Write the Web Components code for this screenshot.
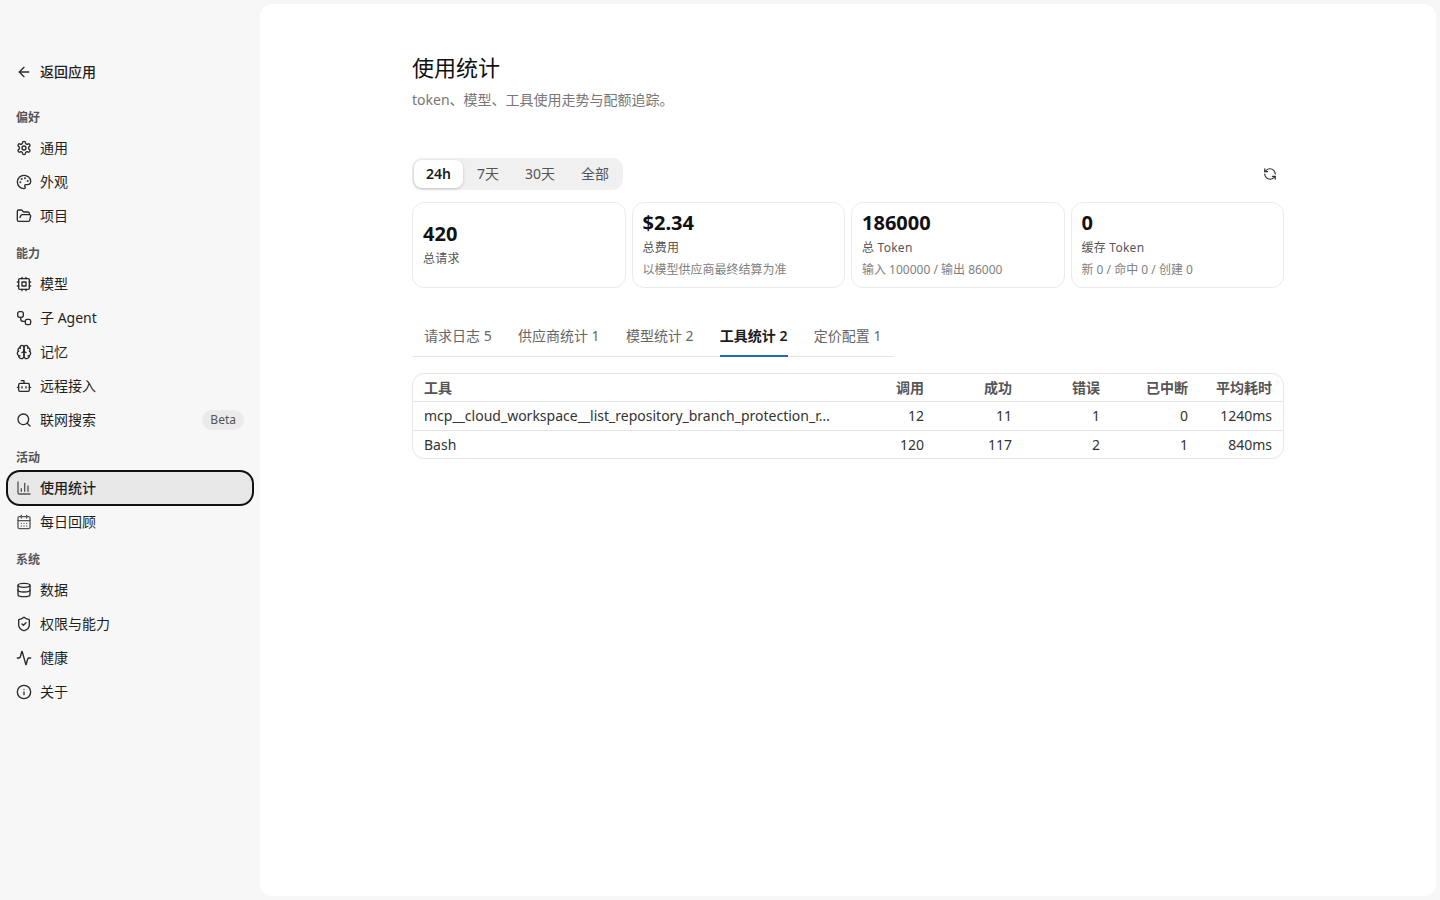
<!DOCTYPE html>
<html lang="zh-CN">
<head>
<meta charset="utf-8">
<title>使用统计</title>
<style>
    html, body { margin: 0; height: 100%; }
    body {
        background: #f7f7f7;
        color: #1a1a1a;
        font-family: "Noto Sans", "Noto Sans CJK SC", sans-serif;
        font-size: 14px;
    }
</style>
</head>
<body>
<app-shell>
    <settings-nav slot="nav"></settings-nav>
    <usage-page></usage-page>
</app-shell>

<script>
const ICONS = {
    back: '<path d="m12 19-7-7 7-7"/><path d="M19 12H5"/>',
    settings: '<path d="M12.22 2h-.44a2 2 0 0 0-2 2v.18a2 2 0 0 1-1 1.73l-.43.25a2 2 0 0 1-2 0l-.15-.08a2 2 0 0 0-2.73.73l-.22.38a2 2 0 0 0 .73 2.73l.15.1a2 2 0 0 1 1 1.72v.51a2 2 0 0 1-1 1.74l-.15.09a2 2 0 0 0-.73 2.73l.22.38a2 2 0 0 0 2.73.73l.15-.08a2 2 0 0 1 2 0l.43.25a2 2 0 0 1 1 1.73V20a2 2 0 0 0 2 2h.44a2 2 0 0 0 2-2v-.18a2 2 0 0 1 1-1.73l.43-.25a2 2 0 0 1 2 0l.15.08a2 2 0 0 0 2.73-.73l.22-.39a2 2 0 0 0-.73-2.73l-.15-.08a2 2 0 0 1-1-1.74v-.5a2 2 0 0 1 1-1.74l.15-.09a2 2 0 0 0 .73-2.73l-.22-.38a2 2 0 0 0-2.73-.73l-.15.08a2 2 0 0 1-2 0l-.43-.25a2 2 0 0 1-1-1.73V4a2 2 0 0 0-2-2z"/><circle cx="12" cy="12" r="3"/>',
    palette: '<path d="M12 22a1 1 0 0 1 0-20 10 9 0 0 1 10 9 5 5 0 0 1-5 5h-2.25a1.75 1.75 0 0 0-1.4 2.8l.3.4a1.75 1.75 0 0 1-1.4 2.8z"/><circle cx="13.5" cy="6.5" r=".5" fill="currentColor"/><circle cx="17.5" cy="10.5" r=".5" fill="currentColor"/><circle cx="6.5" cy="12.5" r=".5" fill="currentColor"/><circle cx="8.5" cy="7.5" r=".5" fill="currentColor"/>',
    folder: '<path d="m6 14 1.5-2.9A2 2 0 0 1 9.24 10H20a2 2 0 0 1 1.94 2.5l-1.54 6a2 2 0 0 1-1.95 1.5H4a2 2 0 0 1-2-2V5a2 2 0 0 1 2-2h3.9a2 2 0 0 1 1.69.9l.81 1.2a2 2 0 0 0 1.67.9H18a2 2 0 0 1 2 2v2"/>',
    cpu: '<rect x="4" y="4" width="16" height="16" rx="2"/><rect x="9" y="9" width="6" height="6"/><path d="M15 2v2M15 20v2M2 15h2M2 9h2M20 15h2M20 9h2M9 2v2M9 20v2"/>',
    agent: '<rect x="2.5" y="2.5" width="8.5" height="8.5" rx="3"/><rect x="14" y="14" width="8" height="8" rx="2.5"/><path d="M7 11v2a4 4 0 0 0 4 4h3"/>',
    brain: '<path d="M12 5a3 3 0 1 0-5.997.125 4 4 0 0 0-2.526 5.77 4 4 0 0 0 .556 6.588A4 4 0 1 0 12 18Z"/><path d="M12 5a3 3 0 1 1 5.997.125 4 4 0 0 1 2.526 5.77 4 4 0 0 1-.556 6.588A4 4 0 1 1 12 18Z"/><path d="M15 13a4.5 4.5 0 0 1-3-4 4.5 4.5 0 0 1-3 4"/><path d="M17.599 6.5a3 3 0 0 0 .399-1.375"/><path d="M6.003 5.125A3 3 0 0 0 6.401 6.5"/><path d="M3.477 10.896a4 4 0 0 1 .585-.396"/><path d="M19.938 10.5a4 4 0 0 1 .585.396"/><path d="M6 18a4 4 0 0 1-1.967-.516"/><path d="M19.967 17.484A4 4 0 0 1 18 18"/>',
    bot: '<path d="M12 8V4H8"/><rect x="4" y="8" width="16" height="12" rx="2"/><path d="M2 14h2M20 14h2M15 13v2M9 13v2"/>',
    search: '<path d="m21 21-4.34-4.34"/><circle cx="11" cy="11" r="8"/>',
    chart: '<path d="M3 3v16a2 2 0 0 0 2 2h16"/><path d="M8 17v-4"/><path d="M13 17V5"/><path d="M18 17V9"/>',
    calendar: '<path d="M8 2v4M16 2v4"/><rect x="3" y="4" width="18" height="18" rx="2"/><path d="M3 10h18M8 14h.01M12 14h.01M16 14h.01M8 18h.01M12 18h.01M16 18h.01"/>',
    database: '<ellipse cx="12" cy="5" rx="9" ry="3"/><path d="M3 5v14a9 3 0 0 0 18 0V5"/><path d="M3 12a9 3 0 0 0 18 0"/>',
    shield: '<path d="M20 13c0 5-3.5 7.5-7.66 8.95a1 1 0 0 1-.67-.01C7.5 20.5 4 18 4 13V6a1 1 0 0 1 1-1c2 0 4.5-1.2 6.24-2.72a1.17 1.17 0 0 1 1.52 0C14.51 3.81 17 5 19 5a1 1 0 0 1 1 1z"/><path d="m9 12 2 2 4-4"/>',
    activity: '<path d="M22 12h-2.48a2 2 0 0 0-1.93 1.46l-2.35 8.36a.25.25 0 0 1-.48 0L9.24 2.18a.25.25 0 0 0-.48 0l-2.35 8.36A2 2 0 0 1 4.49 12H2"/>',
    info: '<circle cx="12" cy="12" r="10"/><path d="M12 16v-4M12 8h.01"/>',
    refresh: '<path d="M21 12a9 9 0 0 0-9-9 9.75 9.75 0 0 0-6.74 2.74L3 8"/><path d="M3 3v5h5"/><path d="M3 12a9 9 0 0 0 9 9 9.75 9.75 0 0 0 6.74-2.74L21 16"/><path d="M16 16h5v5"/>'
};

class UiIcon extends HTMLElement {
    connectedCallback() {
        const size = this.getAttribute('size') || 16;
        this.attachShadow({ mode: 'open' }).innerHTML = `
            <style>
                :host { display: inline-flex; flex: none; }
                svg { display: block; }
            </style>
            <svg width="${size}" height="${size}" viewBox="0 0 24 24" fill="none" stroke="currentColor"
                stroke-width="2" stroke-linecap="round" stroke-linejoin="round">${ICONS[this.getAttribute('name')] || ''}</svg>
        `;
    }
}
customElements.define('ui-icon', UiIcon);

class AppShell extends HTMLElement {
    constructor() {
        super();
        this.attachShadow({ mode: 'open' }).innerHTML = `
            <style>
                :host { display: flex; height: 900px; overflow: hidden; }
                .nav { width: 260px; flex: none; }
                .panel {
                    flex: 1;
                    margin: 4px 4px 4px 0;
                    background: #fff;
                    border-radius: 12px;
                    overflow: hidden;
                }
            </style>
            <div class="nav"><slot name="nav"></slot></div>
            <div class="panel"><slot></slot></div>
        `;
    }
}
customElements.define('app-shell', AppShell);

class NavItem extends HTMLElement {
    constructor() {
        super();
        this.attachShadow({ mode: 'open' }).innerHTML = `
            <style>
                :host { display: block; }
                .row {
                    height: 32px;
                    display: flex;
                    align-items: center;
                    gap: 8px;
                    padding: 0 8px;
                    border-radius: 12px;
                    font-size: 14px;
                    line-height: 20px;
                    color: #1f1f1f;
                }
                ui-icon { color: #2a2a2a; }
                .label { flex: 1; }
                :host([active]) .row {
                    background: #e7e7e7;
                    box-shadow: 0 0 0 2px #111;
                }
                :host([active]) ui-icon { color: #555; }
                :host([active]) .label { font-weight: 500; }
                :host([muted]) ui-icon { color: #555; }
                .badge {
                    font-size: 12px;
                    line-height: 20px;
                    padding: 0 8px;
                    border-radius: 10px;
                    background: #ebebeb;
                    color: #555;
                }
            </style>
            <div class="row">
                <ui-icon name="${this.getAttribute('icon')}"></ui-icon>
                <span class="label"><slot></slot></span>
                ${this.hasAttribute('badge') ? `<span class="badge">${this.getAttribute('badge')}</span>` : ''}
            </div>
        `;
    }
}
customElements.define('nav-item', NavItem);

class NavGroup extends HTMLElement {
    constructor() {
        super();
        this.attachShadow({ mode: 'open' }).innerHTML = `
            <style>
                :host { display: flex; flex-direction: column; gap: 2px; margin-top: 12px; }
                .title {
                    height: 20px;
                    margin-bottom: 2px;
                    padding: 0 8px;
                    font-size: 12px;
                    line-height: 20px;
                    font-weight: 600;
                    color: #555;
                }
            </style>
            <div class="title">${this.getAttribute('label')}</div>
            <slot></slot>
        `;
    }
}
customElements.define('nav-group', NavGroup);

class SettingsNav extends HTMLElement {
    constructor() {
        super();
        this.attachShadow({ mode: 'open' }).innerHTML = `
            <style>
                :host { display: block; padding: 56px 8px 0; }
            </style>
            <nav-item icon="back" style="font-weight:500">返回应用</nav-item>
            <nav-group label="偏好" style="margin-top:20px">
                <nav-item icon="settings">通用</nav-item>
                <nav-item icon="palette">外观</nav-item>
                <nav-item icon="folder">项目</nav-item>
            </nav-group>
            <nav-group label="能力">
                <nav-item icon="cpu">模型</nav-item>
                <nav-item icon="agent">子 Agent</nav-item>
                <nav-item icon="brain">记忆</nav-item>
                <nav-item icon="bot">远程接入</nav-item>
                <nav-item icon="search" badge="Beta">联网搜索</nav-item>
            </nav-group>
            <nav-group label="活动">
                <nav-item icon="chart" active>使用统计</nav-item>
                <nav-item icon="calendar" muted>每日回顾</nav-item>
            </nav-group>
            <nav-group label="系统">
                <nav-item icon="database">数据</nav-item>
                <nav-item icon="shield">权限与能力</nav-item>
                <nav-item icon="activity">健康</nav-item>
                <nav-item icon="info">关于</nav-item>
            </nav-group>
        `;
    }
}
customElements.define('settings-nav', SettingsNav);

class RangeTabs extends HTMLElement {
    constructor() {
        super();
        const options = ['24h', '7天', '30天', '全部'];
        this.attachShadow({ mode: 'open' }).innerHTML = `
            <style>
                :host {
                    display: inline-flex;
                    padding: 2px;
                    background: #f0f0f0;
                    border-radius: 10px;
                }
                button {
                    all: unset;
                    height: 28px;
                    padding: 0 12px;
                    margin-right: 2px;
                    font: inherit;
                    font-size: 14px;
                    line-height: 28px;
                    color: #555;
                    border-radius: 8px;
                }
                button:last-child { margin-right: 0; }
                button.on {
                    background: #fff;
                    color: #1a1a1a;
                    font-weight: 600;
                    box-shadow: 0 1px 3px rgba(0,0,0,.2);
                }
            </style>
            ${options.map((o, i) => `<button class="${i === 0 ? 'on' : ''}">${o}</button>`).join('')}
        `;
    }
}
customElements.define('range-tabs', RangeTabs);

class StatCard extends HTMLElement {
    constructor() {
        super();
        const hint = this.getAttribute('hint');
        this.attachShadow({ mode: 'open' }).innerHTML = `
            <style>
                :host {
                    display: flex;
                    flex-direction: column;
                    justify-content: center;
                    min-width: 0;
                    height: 86px;
                    box-sizing: border-box;
                    padding: 0 10px 3px;
                    border: 1px solid #ebebeb;
                    border-radius: 12px;
                }
                .value { font-size: 20px; line-height: 28px; font-weight: 700; color: #111; }
                .label { font-size: 12px; line-height: 16px; margin-top: 3px; color: #555; letter-spacing: .25px; }
                .hint { font-size: 12px; line-height: 16px; margin-top: 6px; color: #808080; }
            </style>
            <div class="value">${this.getAttribute('value')}</div>
            <div class="label">${this.getAttribute('label')}</div>
            ${hint ? `<div class="hint">${hint}</div>` : ''}
        `;
    }
}
customElements.define('stat-card', StatCard);

class DataTabs extends HTMLElement {
    constructor() {
        super();
        const tabs = ['请求日志 5', '供应商统计 1', '模型统计 2', '工具统计 2', '定价配置 1'];
        this.attachShadow({ mode: 'open' }).innerHTML = `
            <style>
                :host {
                    display: inline-flex;
                    gap: 2.3px;
                    padding-right: 1px;
                    border-bottom: 1px solid #e6e6e6;
                }
                .tab {
                    position: relative;
                    height: 36px;
                    padding: 0 12px;
                    font-size: 14px;
                    line-height: 32px;
                    color: #666;
                    white-space: nowrap;
                }
                .tab.on { color: #1a1a1a; font-weight: 600; }
                .tab.on::after {
                    content: "";
                    position: absolute;
                    left: 12px;
                    right: 12px;
                    bottom: -1px;
                    height: 2px;
                    background: #1f6cb5;
                }
            </style>
            ${tabs.map((t, i) => `<div class="tab ${i === 3 ? 'on' : ''}">${t}</div>`).join('')}
        `;
    }
}
customElements.define('data-tabs', DataTabs);

class ToolTable extends HTMLElement {
    constructor() {
        super();
        const rows = [
            ['mcp__cloud_workspace__list_repository_branch_protection_r…', 12, 11, 1, 0, '1240ms'],
            ['Bash', 120, 117, 2, 1, '840ms']
        ];
        const heads = ['工具', '调用', '成功', '错误', '已中断', '平均耗时'];
        this.attachShadow({ mode: 'open' }).innerHTML = `
            <style>
                :host {
                    display: block;
                    border: 1px solid #e6e6e6;
                    border-radius: 12px;
                    overflow: hidden;
                }
                .row {
                    display: grid;
                    grid-template-columns: 1fr 88px 88px 88px 88px 84px;
                    height: 28px;
                    align-items: center;
                    padding: 0 11px;
                    border-top: 1px solid #e6e6e6;
                    font-size: 14px;
                    line-height: 20px;
                    color: #333;
                }
                .row.head { height: 27px; border-top: 0; font-weight: 600; color: #555; }
                .row:last-child { height: 27px; }
                .row > div { text-align: right; white-space: nowrap; }
                .row > div:first-child { text-align: left; }
            </style>
            <div class="row head">${heads.map(h => `<div>${h}</div>`).join('')}</div>
            ${rows.map(r => `<div class="row">${r.map(c => `<div>${c}</div>`).join('')}</div>`).join('')}
        `;
    }
}
customElements.define('tool-table', ToolTable);

class UsagePage extends HTMLElement {
    constructor() {
        super();
        this.attachShadow({ mode: 'open' }).innerHTML = `
            <style>
                :host { display: block; width: 872px; margin: 0 auto; padding-top: 45px; }
                h1 { margin: 0; font-size: 22px; line-height: 36px; font-weight: 400; color: #111; }
                p { margin: 5px 0 0; font-size: 14px; line-height: 20px; color: #777; }
                .toolbar {
                    display: flex;
                    justify-content: space-between;
                    align-items: center;
                    margin-top: 48px;
                }
                .refresh { display: flex; padding: 8px 7px; color: #333; }
                .cards {
                    display: grid;
                    grid-template-columns: repeat(4, 1fr);
                    gap: 6px;
                    margin-top: 12px;
                }
                data-tabs { margin-top: 32px; }
                tool-table { margin-top: 16px; }
            </style>
            <h1>使用统计</h1>
            <p>token、模型、工具使用走势与配额追踪。</p>
            <div class="toolbar">
                <range-tabs></range-tabs>
                <span class="refresh"><ui-icon name="refresh" size="14"></ui-icon></span>
            </div>
            <div class="cards">
                <stat-card value="420" label="总请求"></stat-card>
                <stat-card value="$2.34" label="总费用" hint="以模型供应商最终结算为准"></stat-card>
                <stat-card value="186000" label="总 Token" hint="输入 100000 / 输出 86000"></stat-card>
                <stat-card value="0" label="缓存 Token" hint="新 0 / 命中 0 / 创建 0"></stat-card>
            </div>
            <data-tabs></data-tabs>
            <tool-table></tool-table>
        `;
    }
}
customElements.define('usage-page', UsagePage);
</script>
</body>
</html>
